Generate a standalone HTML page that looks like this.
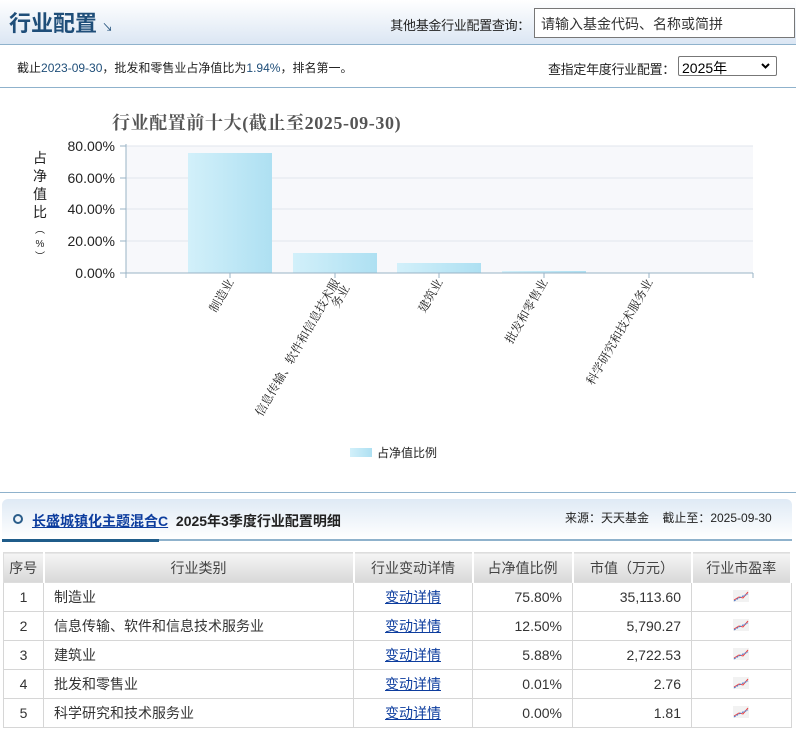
<!DOCTYPE html>
<html><head><meta charset="utf-8"><style>
*{margin:0;padding:0;box-sizing:border-box}
body{width:796px;height:730px;background:#fff;font-family:"Liberation Sans","Noto Sans CJK SC",sans-serif;font-size:13px;color:#333;position:relative;overflow:hidden}
.abs{position:absolute}
.hdr{left:0;top:0;width:796px;height:45px;background:linear-gradient(#fff,#dbe6f3);border-bottom:1px solid #8fb2cc}
.title{left:9px;top:6px;font-size:22px;font-weight:bold;color:#1f4e79;font-family:"Noto Sans CJK SC",sans-serif}
.inp{left:534px;top:8px;width:261px;height:30px;border:1px solid #777;background:#fff;font-size:14px;color:#333;padding:5px 6px}
.l2{left:0;top:87px;width:796px;border-top:1px solid #8fb2cc}
table{position:absolute;left:3px;top:552px;width:789px;border-collapse:collapse}
th{height:30px;background:linear-gradient(#f5f5f5,#d8d8d8);font-weight:normal;font-size:14px;color:#444;border:1px solid #ddd;border-right:2px solid #fff}
td{height:29px;border:1px solid #d6d6d6;font-size:14px;color:#333}
a{color:#0d3d9e}
.r{text-align:right;padding-right:10px}
</style></head><body>
<div class="abs hdr"></div>
<div class="abs title">行业配置 <span style="font-size:11px;font-weight:normal;color:#1f4e79">↘</span></div>
<div class="abs" style="right:266px;top:15px;font-size:13px;color:#222;letter-spacing:-0.3px;white-space:nowrap">其他基金行业配置查询：</div>
<div class="abs inp">请输入基金代码、名称或简拼</div>
<div class="abs" style="left:17px;top:59px;font-size:12px;color:#222">截止<span style="color:#1f4e79">2023-09-30</span>，批发和零售业占净值比为<span style="color:#1f4e79">1.94%</span>，排名第一。</div>
<div class="abs" style="right:121px;top:59px;font-size:13px;color:#222;letter-spacing:-0.3px;white-space:nowrap">查指定年度行业配置：</div>
<div class="abs" style="left:678px;top:56px;width:99px;height:20px;border:1px solid #777;border-radius:2px;font-size:14px;padding:1px 3px;color:#000">2025年<svg style="position:absolute;right:6px;top:6px" width="9" height="6"><path d="M1 1L4.5 4.5L8 1" stroke="#000" stroke-width="2" fill="none"/></svg></div>
<div class="abs l2"></div>
<svg class="abs" style="left:0;top:88px" width="796" height="400">
<text x="112" y="41" font-size="18" font-weight="bold" fill="#555" font-family="Liberation Serif,Noto Serif CJK SC,serif" letter-spacing="0.6">行业配置前十大(截止至2025-09-30)</text>
<rect x="126" y="58" width="627" height="127" fill="#f7f8fb"/>
<g stroke="#e0e6ee"><line x1="126" y1="58" x2="753" y2="58"/><line x1="126" y1="90" x2="753" y2="90"/><line x1="126" y1="121" x2="753" y2="121"/><line x1="126" y1="153" x2="753" y2="153"/></g>
<defs><linearGradient id="g"><stop offset="0" stop-color="#d2f0fa"/><stop offset="1" stop-color="#aee0f2"/></linearGradient></defs>
<rect x="188" y="65" width="84" height="120" fill="url(#g)"/>
<rect x="293" y="165" width="84" height="20" fill="url(#g)"/>
<rect x="397" y="175" width="84" height="10" fill="url(#g)"/>
<rect x="502" y="183" width="84" height="2" fill="url(#g)"/>
<g stroke="#9ab3c6"><line x1="126" y1="56" x2="126" y2="185"/><line x1="126" y1="185" x2="753" y2="185"/>
<line x1="120" y1="58" x2="126" y2="58"/><line x1="120" y1="90" x2="126" y2="90"/><line x1="120" y1="121" x2="126" y2="121"/><line x1="120" y1="153" x2="126" y2="153"/><line x1="120" y1="185" x2="126" y2="185"/>
<line x1="126" y1="185" x2="126" y2="190"/><line x1="230" y1="185" x2="230" y2="190"/><line x1="335" y1="185" x2="335" y2="190"/><line x1="439" y1="185" x2="439" y2="190"/><line x1="544" y1="185" x2="544" y2="190"/><line x1="649" y1="185" x2="649" y2="190"/><line x1="753" y1="185" x2="753" y2="190"/></g>
<g font-size="14" fill="#222" text-anchor="end"><text x="115" y="63">80.00%</text><text x="115" y="95">60.00%</text><text x="115" y="126">40.00%</text><text x="115" y="158">20.00%</text><text x="115" y="190">0.00%</text></g>
<g font-size="14" fill="#222" text-anchor="middle"><text x="40" y="75">占</text><text x="40" y="93">净</text><text x="40" y="111">值</text><text x="40" y="129">比</text><text x="40" y="145" font-size="10">︵</text><text x="40" y="159" font-size="10">%</text><text x="40" y="172" font-size="10">︶</text></g>
<g font-size="12" fill="#222" font-family="Noto Serif CJK SC,serif" text-anchor="end">
<text transform="translate(234,194) rotate(-60)">制造业</text>
<text transform="translate(340,194) rotate(-60)">信息传输、软件和信息技术服</text>
<text transform="translate(350,200) rotate(-60)">务业</text>
<text transform="translate(443,194) rotate(-60)">建筑业</text>
<text transform="translate(548,194) rotate(-60)">批发和零售业</text>
<text transform="translate(653,194) rotate(-60)">科学研究和技术服务业</text></g>
<rect x="350" y="360" width="22" height="9" fill="url(#g)"/>
<text x="377" y="369" font-size="12" fill="#222">占净值比例</text>
</svg>
<div class="abs" style="left:0;top:492px;width:796px;border-top:1px solid #8fb2cc"></div>
<div class="abs" style="left:2px;top:499px;width:790px;height:42px;background:linear-gradient(#dfeaf5,#fff);border-radius:6px 6px 0 0;border-bottom:2px solid #8fb2cc"></div>
<div class="abs" style="left:2px;top:539px;width:157px;height:3px;background:#1f5c8a"></div>
<div class="abs" style="left:13px;top:514px;width:10px;height:10px;border:2px solid #2a5d8a;border-radius:50%"></div>
<div class="abs" style="left:32px;top:511px;font-size:14px;font-weight:bold;color:#222"><a href="#" style="color:#0d3d9e">长盛城镇化主题混合C</a>&nbsp; 2025年3季度行业配置明细</div>
<div class="abs" style="left:565px;top:509px;font-size:12px;color:#222">来源：天天基金 &nbsp;&nbsp; 截止至：2025-09-30</div>
<table>
<tr><th style="width:40px">序号</th><th style="width:310px">行业类别</th><th style="width:119px">行业变动详情</th><th style="width:100px">占净值比例</th><th style="width:119px">市值（万元）</th><th>行业市盈率</th></tr>
<tr><td align="center">1</td><td style="padding-left:10px">制造业</td><td align="center"><a href="#">变动详情</a></td><td class="r">75.80%</td><td class="r">35,113.60</td><td align="center"><svg width="16" height="12"><rect width="16" height="12" fill="#f2f2f2"/><path d="M1 10L6 7L10 8L15 2" stroke="#e44" fill="none"/><path d="M1 11L6 8L10 6L15 4" stroke="#47c" fill="none" stroke-dasharray="2 1"/></svg></td></tr>
<tr><td align="center">2</td><td style="padding-left:10px">信息传输、软件和信息技术服务业</td><td align="center"><a href="#">变动详情</a></td><td class="r">12.50%</td><td class="r">5,790.27</td><td align="center"><svg width="16" height="12"><rect width="16" height="12" fill="#f2f2f2"/><path d="M1 10L6 7L10 8L15 2" stroke="#e44" fill="none"/><path d="M1 11L6 8L10 6L15 4" stroke="#47c" fill="none" stroke-dasharray="2 1"/></svg></td></tr>
<tr><td align="center">3</td><td style="padding-left:10px">建筑业</td><td align="center"><a href="#">变动详情</a></td><td class="r">5.88%</td><td class="r">2,722.53</td><td align="center"><svg width="16" height="12"><rect width="16" height="12" fill="#f2f2f2"/><path d="M1 10L6 7L10 8L15 2" stroke="#e44" fill="none"/><path d="M1 11L6 8L10 6L15 4" stroke="#47c" fill="none" stroke-dasharray="2 1"/></svg></td></tr>
<tr><td align="center">4</td><td style="padding-left:10px">批发和零售业</td><td align="center"><a href="#">变动详情</a></td><td class="r">0.01%</td><td class="r">2.76</td><td align="center"><svg width="16" height="12"><rect width="16" height="12" fill="#f2f2f2"/><path d="M1 10L6 7L10 8L15 2" stroke="#e44" fill="none"/><path d="M1 11L6 8L10 6L15 4" stroke="#47c" fill="none" stroke-dasharray="2 1"/></svg></td></tr>
<tr><td align="center">5</td><td style="padding-left:10px">科学研究和技术服务业</td><td align="center"><a href="#">变动详情</a></td><td class="r">0.00%</td><td class="r">1.81</td><td align="center"><svg width="16" height="12"><rect width="16" height="12" fill="#f2f2f2"/><path d="M1 10L6 7L10 8L15 2" stroke="#e44" fill="none"/><path d="M1 11L6 8L10 6L15 4" stroke="#47c" fill="none" stroke-dasharray="2 1"/></svg></td></tr>
</table>
</body></html>
